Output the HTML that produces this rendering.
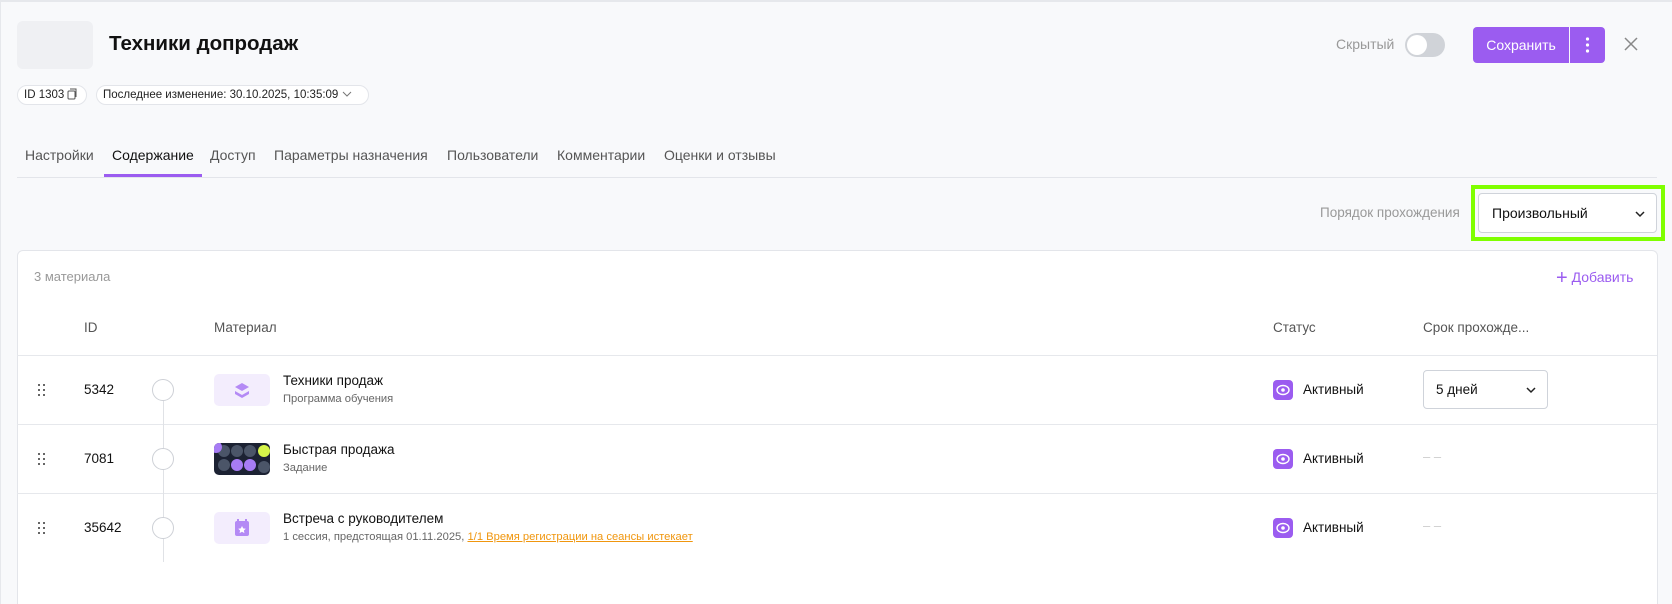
<!DOCTYPE html>
<html style="width:1672px;height:604px;overflow:hidden"><head><meta charset="utf-8">
<style>
*{box-sizing:border-box;margin:0;padding:0}
body{width:1672px;height:604px;overflow:hidden;background:#f8f9fb;font-family:"Liberation Sans",Arial,sans-serif;color:#111;position:relative;border-top:2px solid #e6e8ec;border-left:1px solid #e6e8ec}
.a{position:absolute;white-space:nowrap}
.thumb{left:16px;top:19px;width:76px;height:48px;background:#eff0f3;border-radius:6px}
.title{left:108px;top:30px;font-size:20.5px;font-weight:bold;color:#111}
.badge{top:83px;height:20px;border:1px solid #e3e5ea;border-radius:10px;background:#fff;font-size:11.5px;line-height:18px;padding:0 6px;color:#222}
.tab{top:145px;font-size:14px;color:#555}
.sel{background:#fff;border:1px solid #cfd3da;border-radius:4px}
.hdr{top:318px;font-size:13.5px;color:#555}
.rowline{left:16px;width:1640px;height:1px;background:#e6e8ec}
.t1{font-size:13.5px;color:#111}
.t2{font-size:11.2px;color:#666}
.ic{width:56px;height:32px;border-radius:5px;background:#f3edfd}
.st{width:20px;height:20px;border-radius:4px;background:#9b5cf0}
.dots{width:8px;height:12px}
.circ{width:22px;height:22px;border:1px solid #cdd0d6;border-radius:50%;background:#fff}
</style></head><body>
<div class="a thumb"></div>
<div class="a title">Техники допродаж</div>
<div class="a badge" style="left:16px;width:70px">ID 1303 <svg width="11" height="12" viewBox="0 0 11 12" style="vertical-align:-2px"><rect x="1" y="3" width="7" height="8" rx="1" fill="none" stroke="#555"/><path d="M3 1h6v8" fill="none" stroke="#555"/></svg></div>
<div class="a badge" style="left:95px;width:273px">Последнее изменение: 30.10.2025, 10:35:09 <svg width="10" height="8" viewBox="0 0 10 8" style="vertical-align:0"><path d="M1 2l4 4 4-4" fill="none" stroke="#777"/></svg></div>

<div class="a tab" style="left:24px">Настройки</div>
<div class="a tab" style="left:111px;color:#111">Содержание</div>
<div class="a tab" style="left:209px">Доступ</div>
<div class="a tab" style="left:273px">Параметры назначения</div>
<div class="a tab" style="left:446px">Пользователи</div>
<div class="a tab" style="left:556px">Комментарии</div>
<div class="a tab" style="left:663px">Оценки и отзывы</div>
<div class="a" style="left:16px;top:175px;width:1640px;height:1px;background:#e3e5ea"></div>
<div class="a" style="left:103px;top:172px;width:98px;height:3px;background:#9b5cf0"></div>

<div class="a" style="left:1335px;top:34px;font-size:14px;color:#999">Скрытый</div>
<div class="a" style="left:1404px;top:31px;width:40px;height:24px;border-radius:12px;background:#d0d3d8"><div style="position:absolute;left:2px;top:2px;width:20px;height:20px;border-radius:50%;background:#fff"></div></div>
<div class="a" style="left:1472px;top:25px;width:96px;height:36px;background:#9b5cf0;border-radius:4px 0 0 4px;color:#fff;font-size:14px;line-height:36px;text-align:center">Сохранить</div>
<div class="a" style="left:1569px;top:25px;width:35px;height:36px;background:#9b5cf0;border-radius:0 4px 4px 0"><svg width="35" height="36"><circle cx="17.5" cy="12" r="1.6" fill="#fff"/><circle cx="17.5" cy="18" r="1.6" fill="#fff"/><circle cx="17.5" cy="24" r="1.6" fill="#fff"/></svg></div>
<svg class="a" style="left:1623px;top:35px" width="14" height="14"><path d="M1 1l12 12M13 1L1 13" stroke="#888" stroke-width="1.5"/></svg>

<div class="a" style="left:1319px;top:203px;font-size:13.5px;color:#999">Порядок прохождения</div>
<div class="a" style="left:1470px;top:183px;width:194px;height:56px;border:4px solid #7fff00"></div>
<div class="a sel" style="left:1477px;top:191px;width:179px;height:40px"><span style="position:absolute;left:13px;top:11px;font-size:14px;color:#111">Произвольный</span><svg style="position:absolute;right:10px;top:15px" width="12" height="10"><path d="M2 3l4 4 4-4" fill="none" stroke="#222" stroke-width="1.5"/></svg></div>

<div class="a" style="left:16px;top:248px;width:1641px;height:354px;background:#fff;border:1px solid #e3e5ea;border-bottom:none;border-radius:6px 6px 0 0"></div>
<div class="a" style="left:33px;top:267px;font-size:13px;color:#999">3 материала</div>
<div class="a" style="left:1555px;top:265px;font-size:14px;color:#9b5cf0"><span style="font-size:20px;vertical-align:-2px">+</span> Добавить</div>

<div class="a hdr" style="left:83px">ID</div>
<div class="a hdr" style="left:213px">Материал</div>
<div class="a hdr" style="left:1272px">Статус</div>
<div class="a hdr" style="left:1422px">Срок прохожде...</div>
<div class="a rowline" style="top:353px"></div>
<div class="a rowline" style="top:422px"></div>
<div class="a rowline" style="top:491px"></div>
<div class="a" style="left:162px;top:398px;width:1px;height:162px;background:#e0e2e6"></div>

<svg class="a dots" style="left:37px;top:382px"><g fill="#666"><rect x="0" y="0" width="2" height="2"/><rect x="5" y="0" width="2" height="2"/><rect x="0" y="5" width="2" height="2"/><rect x="5" y="5" width="2" height="2"/><rect x="0" y="10" width="2" height="2"/><rect x="5" y="10" width="2" height="2"/></g></svg>
<svg class="a dots" style="left:37px;top:451px"><g fill="#666"><rect x="0" y="0" width="2" height="2"/><rect x="5" y="0" width="2" height="2"/><rect x="0" y="5" width="2" height="2"/><rect x="5" y="5" width="2" height="2"/><rect x="0" y="10" width="2" height="2"/><rect x="5" y="10" width="2" height="2"/></g></svg>
<svg class="a dots" style="left:37px;top:520px"><g fill="#666"><rect x="0" y="0" width="2" height="2"/><rect x="5" y="0" width="2" height="2"/><rect x="0" y="5" width="2" height="2"/><rect x="5" y="5" width="2" height="2"/><rect x="0" y="10" width="2" height="2"/><rect x="5" y="10" width="2" height="2"/></g></svg>

<div class="a t1" style="left:83px;top:380px">5342</div>
<div class="a t1" style="left:83px;top:449px">7081</div>
<div class="a t1" style="left:83px;top:518px">35642</div>
<div class="a circ" style="left:151px;top:377px"></div>
<div class="a circ" style="left:151px;top:446px"></div>
<div class="a circ" style="left:151px;top:515px"></div>

<div class="a ic" style="left:213px;top:372px"><svg width="56" height="32"><path d="M28 9l7 4-7 4-7-4z" fill="#b48af5"/><path d="M21 17l7 4 7-4v3l-7 4-7-4z" fill="#b48af5"/></svg></div>
<div class="a ic" style="left:213px;top:441px;background:#1c2233;overflow:hidden"><svg width="56" height="32"><g fill="#4b5568"><circle cx="10" cy="8" r="6"/><circle cx="23" cy="8" r="6"/><circle cx="36" cy="8" r="6"/><circle cx="10" cy="22" r="6"/></g><circle cx="2" cy="4" r="6" fill="#a77cf5"/><circle cx="50" cy="8" r="6" fill="#d6f54a"/><circle cx="23" cy="22" r="6" fill="#a77cf5"/><circle cx="36" cy="22" r="6" fill="#a77cf5"/><circle cx="50" cy="24" r="6" fill="#4b5568"/></svg></div>
<div class="a ic" style="left:213px;top:510px"><svg width="56" height="32"><rect x="21" y="9" width="14" height="15" rx="2" fill="#b48af5"/><rect x="23" y="7" width="2" height="4" fill="#b48af5"/><rect x="31" y="7" width="2" height="4" fill="#b48af5"/><path d="M28 14l1.2 2.4 2.6.3-1.9 1.8.5 2.6-2.4-1.3-2.4 1.3.5-2.6-1.9-1.8 2.6-.3z" fill="#fff"/></svg></div>

<div class="a t1" style="left:282px;top:371px">Техники продаж</div>
<div class="a t2" style="left:282px;top:391px">Программа обучения</div>
<div class="a t1" style="left:282px;top:440px">Быстрая продажа</div>
<div class="a t2" style="left:282px;top:460px">Задание</div>
<div class="a t1" style="left:282px;top:509px">Встреча с руководителем</div>
<div class="a t2" style="left:282px;top:529px">1 сессия, предстоящая 01.11.2025, <span style="color:#f0960e;text-decoration:underline">1/1 Время регистрации на сеансы истекает</span></div>

<div class="a st" style="left:1272px;top:378px"><svg width="20" height="20"><ellipse cx="10" cy="10" rx="6" ry="4.5" fill="none" stroke="#fff" stroke-width="1.4"/><circle cx="10" cy="10" r="1.8" fill="#fff"/></svg></div>
<div class="a st" style="left:1272px;top:447px"><svg width="20" height="20"><ellipse cx="10" cy="10" rx="6" ry="4.5" fill="none" stroke="#fff" stroke-width="1.4"/><circle cx="10" cy="10" r="1.8" fill="#fff"/></svg></div>
<div class="a st" style="left:1272px;top:516px"><svg width="20" height="20"><ellipse cx="10" cy="10" rx="6" ry="4.5" fill="none" stroke="#fff" stroke-width="1.4"/><circle cx="10" cy="10" r="1.8" fill="#fff"/></svg></div>
<div class="a t1" style="left:1302px;top:380px">Активный</div>
<div class="a t1" style="left:1302px;top:449px">Активный</div>
<div class="a t1" style="left:1302px;top:518px">Активный</div>

<div class="a sel" style="left:1422px;top:368px;width:125px;height:39px"><span style="position:absolute;left:12px;top:11px;font-size:13.5px">5 дней</span><svg style="position:absolute;right:10px;top:14px" width="12" height="10"><path d="M2 3l4 4 4-4" fill="none" stroke="#222" stroke-width="1.5"/></svg></div>
<div class="a" style="left:1422px;top:447px;font-size:13px;color:#ccc">– –</div>
<div class="a" style="left:1422px;top:516px;font-size:13px;color:#ccc">– –</div>
</body></html>
